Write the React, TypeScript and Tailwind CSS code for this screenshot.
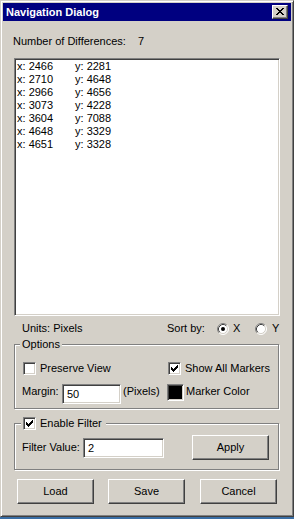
import React from "react";

const sunken =
  "border border-t-[#808080] border-l-[#808080] border-b-white border-r-white shadow-[inset_1px_1px_0_#404040,inset_-1px_-1px_0_#d4d0c8]";
const raised =
  "border border-t-white border-l-white border-b-[#404040] border-r-[#404040] shadow-[inset_-1px_-1px_0_#808080] bg-[#d4d0c8]";
const group =
  "border border-[#808080] shadow-[inset_1px_1px_0_#fff,1px_1px_0_#fff]";

function Check({ checked }: { checked?: boolean }) {
  return (
    <div className={`relative w-[13px] h-[13px] shrink-0 bg-white ${sunken}`}>
      {checked && (
        <svg
          width="7"
          height="7"
          viewBox="0 0 7 7"
          shapeRendering="crispEdges"
          className="absolute left-[2px] top-[2px]"
        >
          <path
            fill="#000"
            d="M6 0h1v1h-1z M5 1h2v1h-2z M0 2h1v1h-1z M4 2h3v1h-3z M0 3h2v1h-2z M3 3h3v1h-3z M0 4h5v1h-5z M1 5h3v1h-3z M2 6h1v1h-1z"
          />
        </svg>
      )}
    </div>
  );
}

function Radio({ checked }: { checked?: boolean }) {
  return (
    <svg width="12" height="12" viewBox="0 0 12 12" className="shrink-0">
      <circle cx="6" cy="6" r="5" fill="#fff" />
      <path d="M2.11 9.89 A5.5 5.5 0 0 1 9.89 2.11" stroke="#808080" fill="none" />
      <path d="M9.89 2.11 A5.5 5.5 0 0 1 2.11 9.89" stroke="#fff" fill="none" />
      <path d="M2.82 9.18 A4.5 4.5 0 0 1 9.18 2.82" stroke="#404040" fill="none" />
      <path d="M9.18 2.82 A4.5 4.5 0 0 1 2.82 9.18" stroke="#d4d0c8" fill="none" />
      {checked && <circle cx="6" cy="6" r="2" fill="#000" />}
    </svg>
  );
}

const points: [number, number][] = [
  [2466, 2281],
  [2710, 4648],
  [2966, 4656],
  [3073, 4228],
  [3604, 7088],
  [4648, 3329],
  [4651, 3328],
];

export default function App() {
  return (
    <div className="w-[294px] h-[519px] bg-[#3a6ea5] font-['Liberation_Sans',Arial,sans-serif] text-[11px] leading-[13px] text-black">
      <div className="w-[294px] h-[517px] bg-[#d4d0c8] border border-t-[#d4d0c8] border-l-[#d4d0c8] border-b-[#404040] border-r-[#404040] shadow-[inset_1px_1px_0_#fff,inset_-1px_-1px_0_#808080] p-[2px] flex flex-col">
        {/* Title bar */}
        <div className="h-[18px] shrink-0 bg-[#000080] flex items-center justify-between pl-[3px] pr-[3px]">
          <span className="text-white font-bold text-[11px]">Navigation Dialog</span>
          <div className={`w-[16px] h-[14px] ${raised} pl-[3px] pt-[2px]`}>
            <svg width="8" height="7" viewBox="0 0 8 7" shapeRendering="crispEdges" className="block">
              <path
                fill="#000"
                d="M0 0h2v1h-2z M6 0h2v1h-2z M1 1h2v1h-2z M5 1h2v1h-2z M2 2h4v1h-4z M3 3h2v1h-2z M2 4h4v1h-4z M1 5h2v1h-2z M5 5h2v1h-2z M0 6h2v1h-2z M6 6h2v1h-2z"
              />
            </svg>
          </div>
        </div>

        {/* Number of differences */}
        <div className="flex mt-[14px] ml-[10px] h-[13px]">
          <span className="w-[125px]">Number of Differences:</span>
          <span>7</span>
        </div>

        {/* List box */}
        <div className={`mt-[10px] ml-[11px] w-[266px] h-[258px] bg-white ${sunken} pl-[2px] pt-[1px]`}>
          {points.map(([x, y]) => (
            <div key={x} className="flex h-[13px]">
              <span className="w-[58px]">x: {x}</span>
              <span>y: {y}</span>
            </div>
          ))}
        </div>

        {/* Units / sort */}
        <div className="flex items-center mt-[6px] ml-[19px] h-[13px]">
          <span className="w-[145px]">Units: Pixels</span>
          <span className="w-[50px]">Sort by:</span>
          <Radio checked />
          <span className="ml-[4px] w-[22px]">X</span>
          <Radio />
          <span className="ml-[5px]">Y</span>
        </div>

        {/* Options group */}
        <div className={`relative mt-[9px] ml-[11px] w-[265px] h-[65px] shrink-0 ${group} pl-[7px] pt-[17px]`}>
          <span className="absolute left-[5px] -top-[7px] bg-[#d4d0c8] px-[2px]">Options</span>
          <div className="flex items-center h-[13px] pl-[1px]">
            <div className="flex items-center w-[145px]">
              <Check />
              <span className="ml-[4px]">Preserve View</span>
            </div>
            <div className="flex items-center">
              <Check checked />
              <span className="ml-[4px]">Show All Markers</span>
            </div>
          </div>
          <div className="flex items-start mt-[9px]">
            <div className="flex items-start w-[145px]">
              <span className="w-[40px] mt-[1px]">Margin:</span>
              <div className={`w-[59px] h-[20px] bg-white ${sunken} pl-[4px] pt-[3px]`}>50</div>
              <span className="ml-[2px] mt-[1px]">(Pixels)</span>
            </div>
            <div className={`w-[17px] h-[17px] bg-black ${sunken}`} />
            <span className="ml-[2px] mt-[1px]">Marker Color</span>
          </div>
        </div>

        {/* Filter group */}
        <div className={`relative mt-[14px] ml-[11px] w-[265px] h-[47px] shrink-0 ${group} pl-[7px] pt-[11px]`}>
          <div className="absolute left-[6px] -top-[7px] bg-[#d4d0c8] pl-[2px] pr-[4px] flex items-center h-[13px]">
            <Check checked />
            <span className="ml-[4px]">Enable Filter</span>
          </div>
          <div className="flex items-center h-[25px]">
            <span className="w-[61px]">Filter Value:</span>
            <div className={`w-[81px] h-[20px] bg-white ${sunken} pl-[4px] pt-[3px]`}>2</div>
            <button className={`ml-[28px] w-[77px] h-[25px] ${raised} flex items-center justify-center`}>
              Apply
            </button>
          </div>
        </div>

        {/* Bottom buttons */}
        <div className="flex mt-[9px]">
          <button className={`ml-[14px] w-[77px] h-[25px] ${raised} flex items-center justify-center`}>Load</button>
          <button className={`ml-[14px] w-[77px] h-[25px] ${raised} flex items-center justify-center`}>Save</button>
          <button className={`ml-[15px] w-[77px] h-[25px] ${raised} flex items-center justify-center`}>Cancel</button>
        </div>
      </div>
    </div>
  );
}
